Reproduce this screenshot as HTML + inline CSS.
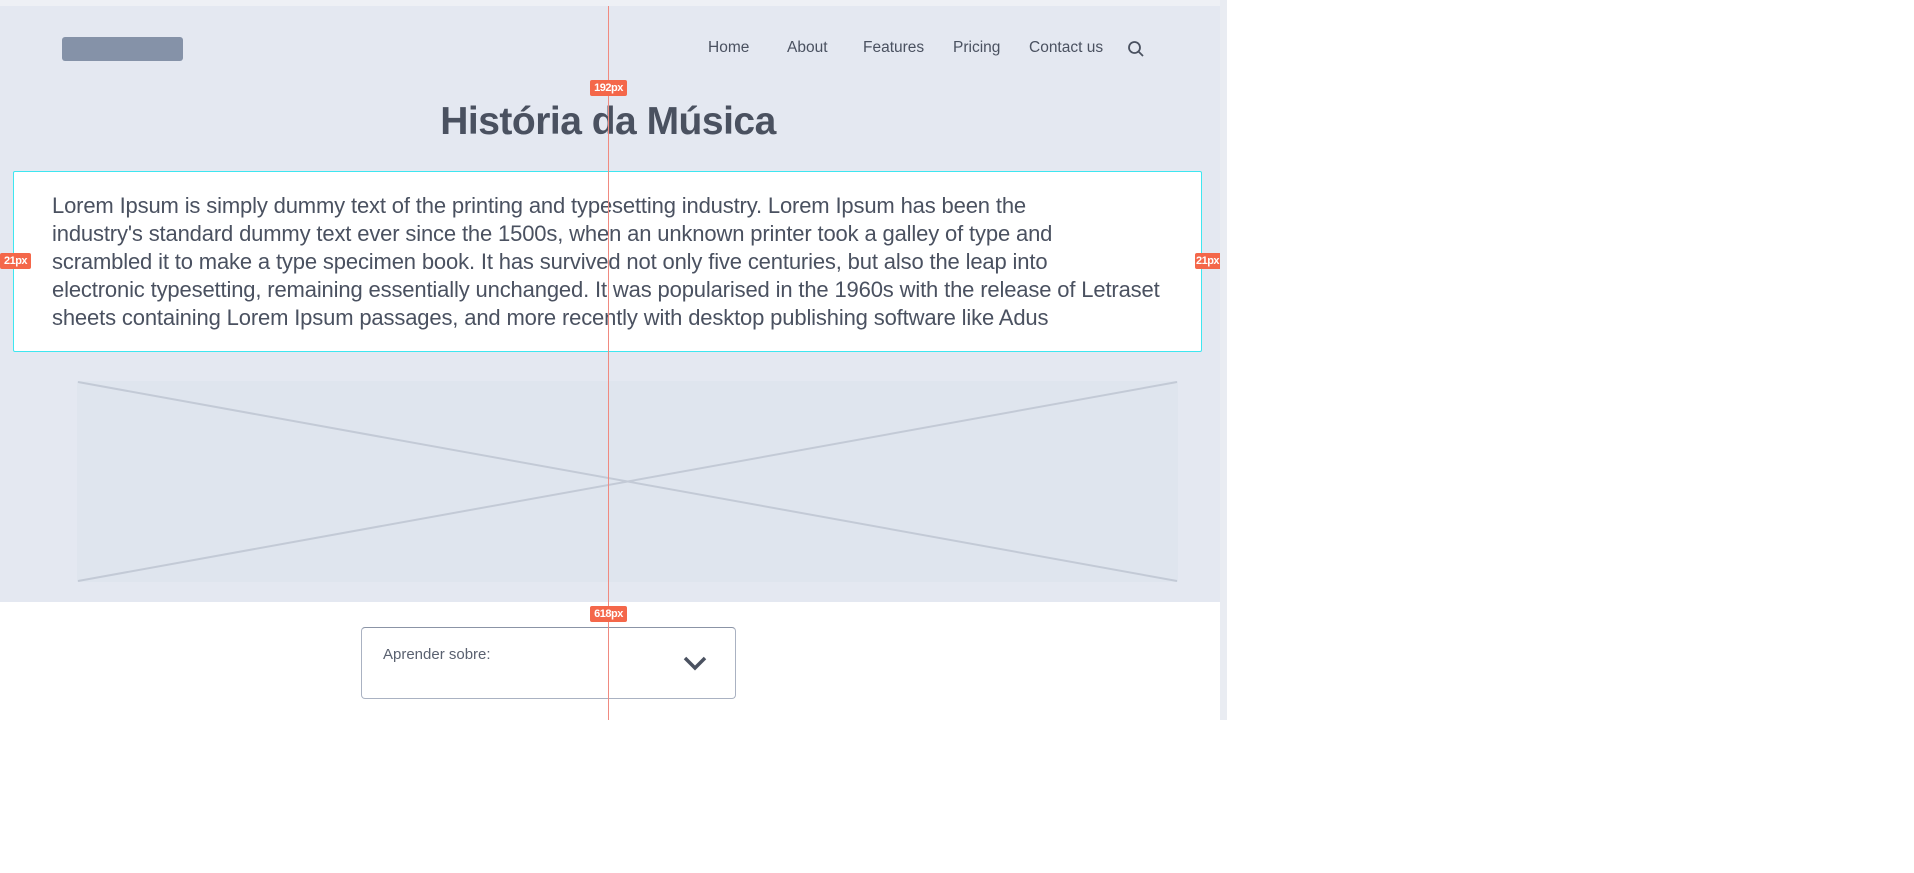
<!DOCTYPE html>
<html><head><meta charset="utf-8"><style>
*{margin:0;padding:0;box-sizing:border-box}
body{width:1914px;height:873px;background:#fff;position:relative;overflow:hidden;font-family:"Liberation Sans",sans-serif;color:#4a5160}
.abs{position:absolute}
.badge{position:absolute;background:#f4674a;color:#fff;font-size:11px;font-weight:bold;border-radius:2px;text-align:center;line-height:16px;height:16px;letter-spacing:-0.5px}
.nav{position:absolute;top:39px;font-size:15.5px;color:#4a5160}
</style></head><body>
<div class="abs" style="left:0;top:0;width:1227px;height:6px;background:#eef0f5"></div>
<div class="abs" style="left:1220px;top:0;width:7px;height:720px;background:#e9ecf2"></div>
<div class="abs" style="left:0;top:6px;width:1220px;height:596px;background:#e4e8f1"></div>
<div class="abs" style="left:62px;top:37px;width:121px;height:24px;background:#8592a8;border-radius:3px"></div>
<div class="nav" style="left:708px">Home</div>
<div class="nav" style="left:787px">About</div>
<div class="nav" style="left:863px">Features</div>
<div class="nav" style="left:953px">Pricing</div>
<div class="nav" style="left:1029px">Contact us</div>
<svg class="abs" style="left:1127px;top:40px" width="18" height="18" viewBox="0 0 18 18"><circle cx="7.5" cy="7.5" r="5.5" fill="none" stroke="#4a5160" stroke-width="1.8"/><line x1="11.5" y1="11.5" x2="16" y2="16" stroke="#4a5160" stroke-width="1.8"/></svg>
<div class="abs" style="left:0;width:1216px;top:100px;text-align:center;font-size:39px;font-weight:bold;color:#4a5160;letter-spacing:-0.5px">História da Música</div>
<div class="abs" style="left:13px;top:171px;width:1189px;height:181px;background:#fff;border:1.5px solid #3ee6f0;border-radius:2px"></div>
<div class="abs" style="left:52px;top:192px;font-size:22px;line-height:28px;color:#4a5160;white-space:nowrap;letter-spacing:-0.15px">Lorem Ipsum is simply dummy text of the printing and typesetting industry. Lorem Ipsum has been the<br>industry's standard dummy text ever since the 1500s, when an unknown printer took a galley of type and<br>scrambled it to make a type specimen book. It has survived not only five centuries, but also the leap into<br>electronic typesetting, remaining essentially unchanged. It was popularised in the 1960s with the release of Letraset<br>sheets containing Lorem Ipsum passages, and more recently with desktop publishing software like Adus</div>
<svg class="abs" style="left:77px;top:381px" width="1101" height="201"><rect width="1101" height="201" fill="#dfe5ee"/><line x1="1" y1="1" x2="1100" y2="200" stroke="#c3cad6" stroke-width="2"/><line x1="1" y1="200" x2="1100" y2="1" stroke="#c3cad6" stroke-width="2"/></svg>
<div class="abs" style="left:608px;top:6px;width:1px;height:714px;background:#f08a80"></div>
<div class="badge" style="left:590px;top:80px;width:37px">192px</div>
<div class="badge" style="left:0;top:253px;width:31px">21px</div>
<div class="badge" style="left:1195px;top:253px;width:25px;border-radius:2px 0 0 2px">21px</div>
<div class="badge" style="left:590px;top:606px;width:37px">618px</div>
<div class="abs" style="left:361px;top:627px;width:375px;height:72px;border:1.5px solid #aab2c2;border-top-color:#8b94a6;border-radius:4px;background:#fff"></div>
<div class="abs" style="left:383px;top:646px;font-size:15px;color:#5a6170">Aprender sobre:</div>
<svg class="abs" style="left:682px;top:654px" width="26" height="18"><polyline points="3,4 13,14 23,4" fill="none" stroke="#4a5160" stroke-width="3.5"/></svg>
<div class="abs" style="left:608px;top:627px;width:1px;height:72px;background:#f08a80"></div>
</body></html>
